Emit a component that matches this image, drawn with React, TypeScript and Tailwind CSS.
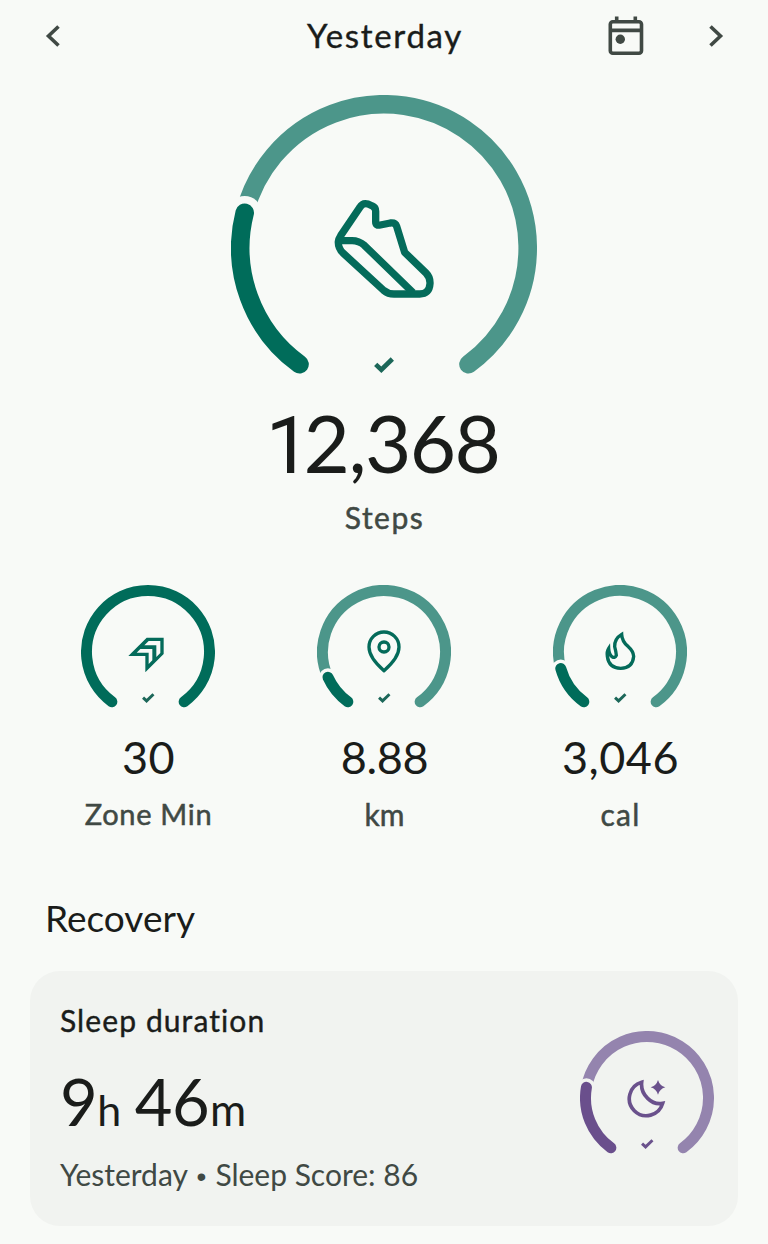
import React from "react";

type RingProps = {
  size: number;
  stroke: number;
  halo: number;
  end: number;
  dark: string;
  light: string;
  bg: string;
};

// Angles run clockwise, measured from the bottom of the ring.
function point(c: number, r: number, deg: number) {
  const a = (deg * Math.PI) / 180;
  return [c - r * Math.sin(a), c + r * Math.cos(a)];
}

function arc(c: number, r: number, from: number, to: number) {
  const [x1, y1] = point(c, r, from);
  const [x2, y2] = point(c, r, to);
  return `M${x1} ${y1}A${r} ${r} 0 ${to - from > 180 ? 1 : 0} 1 ${x2} ${y2}`;
}

function Ring({ size, stroke, halo, end, dark, light, bg }: RingProps) {
  const c = size / 2;
  const r = (size - stroke) / 2;
  const [hx, hy] = point(c, r, end);
  return (
    <svg className="col-start-1 row-start-1 block" width={size} height={size} fill="none" strokeLinecap="round">
      {end < 324 && (
        <>
          <path d={arc(c, r, end, 324)} stroke={light} strokeWidth={stroke} />
          <circle cx={hx} cy={hy} r={halo} fill={bg} />
        </>
      )}
      <path d={arc(c, r, 36, end)} stroke={dark} strokeWidth={stroke} />
    </svg>
  );
}

function Shoe() {
  return (
    <svg width="130" height="120" viewBox="0 0 390 360" fill="none" stroke="#046b5a" strokeWidth="22" strokeLinejoin="round">
      <path d="M62 137 L119 53 Q128 37 144 42 L157 48 Q167 52 167 64 V95 Q167 108 181 105 L211 99 Q226 97 230 109 L254 187 L318 249 Q331 262 330 281 Q328 312 299 312 H222 Q204 312 191 301 L69 189 Q54 174 55 155 Q56 146 62 137 Z" />
      <path d="M56 152 H96 Q117 152 133 166 L279 308" />
    </svg>
  );
}

function Check({ width, color }: { width: number; color: string }) {
  return (
    <svg width={width} height={width * 0.8} viewBox="0 0 60 48" fill="none" stroke={color} strokeWidth="14">
      <path d="M5 22 L22 38 L55 6" />
    </svg>
  );
}

function Zone() {
  return (
    <svg className="mt-[5px] mr-[4px]" width="36" height="36" viewBox="174 199 108 108">
      <path fill="#046b5a" fillRule="evenodd" d="M175 256 L230 201 H281 V250 L226 305 V256 Z M223 224 H259 V259 L271 247 V211 H236 Z M200 246 H236 V280 L247 269 V235 H211 Z" />
    </svg>
  );
}

function Pin() {
  return (
    <svg width="36" height="46" viewBox="184 177 108 138" fill="none" stroke="#046b5a" strokeWidth="10">
      <path d="M238 302 Q193 263 193 231 A45 45 0 0 1 283 231 Q283 263 238 302 Z" />
      <circle cx="238" cy="231" r="15" />
    </svg>
  );
}

function Flame() {
  return (
    <svg className="ml-[2px]" width="34" height="42" viewBox="192 184 102 126" fill="none" stroke="#046b5a" strokeWidth="10" strokeLinejoin="miter">
      <path d="M245 194 Q223 207 224 231 Q228 246 229 257 Q225 266 217 262 Q207 255 206 236 Q200 245 202 260 Q206 295 242 296 Q278 295 281 260 Q280 244 265 231 Q246 216 245 194 Z" />
    </svg>
  );
}

function Moon() {
  return (
    <svg width="40" height="40" viewBox="201 204 120 120" fill="none" stroke="#6a518c" strokeWidth="11">
      <path d="M245 217 A51 51 0 1 0 308 280 Q283 285 263 265 Q242 245 245 217 Z" />
      <path d="M294 210 Q299 227 316 232 Q299 237 294 254 Q289 237 272 232 Q289 227 294 210 Z" fill="#6a518c" stroke="none" />
    </svg>
  );
}

function SmallRing({ end, icon, purple = false }: { end: number; icon: React.ReactNode; purple?: boolean }) {
  return (
    <div className="grid h-[134px] w-[134px]">
      <Ring size={134} stroke={11} halo={9} end={end} dark={purple ? "#6a4f8c" : "#006c5a"} light={purple ? "#9484ae" : "#4c968a"} bg={purple ? "#f1f3f0" : "#f8faf7"} />
      <div className="col-start-1 row-start-1 flex items-center justify-center">{icon}</div>
      <div className="col-start-1 row-start-1 flex items-end justify-center pb-[16px] pl-[1px]">
        <Check width={12.5} color={purple ? "#6a518c" : "#1c6759"} />
      </div>
    </div>
  );
}

function Metric({ end, icon, value, label }: { end: number; icon: React.ReactNode; value: React.ReactNode; label: React.ReactNode }) {
  return (
    <div className="flex w-[236px] flex-col items-center">
      <SmallRing end={end} icon={icon} />
      <div className="mt-[14px] flex h-[48px] items-center pl-[1px] text-[45px] leading-[48px] text-[#1a1c1a]">{value}</div>
      <div className="mt-[15px] flex h-[36px] items-center pl-[1px] text-[29px] leading-[36px] text-[#404944] [-webkit-text-stroke:0.5px]">{label}</div>
    </div>
  );
}

export default function App() {
  return (
    <main className="flex h-[1244px] w-[768px] flex-col overflow-hidden bg-[#f8faf7] font-['Lato',sans-serif] whitespace-nowrap text-[#1a1c1a]">
      <header className="grid h-[72px] grid-cols-[1fr_auto_1fr] items-center">
        <svg className="ml-[44px]" width="18" height="24" viewBox="0 0 18 24" fill="none" stroke="#404944" strokeWidth="3.6">
          <path d="M14.5 2.5 L4.5 12 L14.5 21.5" />
        </svg>
        <h1 className="-mt-[2px] pl-[2px] text-[33px] leading-[40px] tracking-[1.7px] [-webkit-text-stroke:0.4px]">Yesterday</h1>
        <div className="flex items-center justify-end pr-[43px]">
          <svg width="36" height="40" viewBox="0 0 36 40" fill="none" stroke="#404944" strokeWidth="3.6">
            <rect x="2.3" y="5.8" width="31.2" height="31.4" rx="2.5" />
            <path d="M2 14.4 H34 M8.7 0.5 V6 M27.3 0.5 V6" />
            <circle cx="12.3" cy="23.2" r="4.7" fill="#404944" stroke="none" />
          </svg>
          <svg className="ml-[63px]" width="18" height="24" viewBox="0 0 18 24" fill="none" stroke="#404944" strokeWidth="3.6">
            <path d="M3.5 2.5 L13.5 12 L3.5 21.5" />
          </svg>
        </div>
      </header>

      <section className="mt-[23px] flex flex-col items-center">
        <div className="grid h-[306px] w-[306px]">
          <Ring size={306} stroke={18.6} halo={16.8} end={104.2} dark="#006c5a" light="#4c968a" bg="#f8faf7" />
          <div className="col-start-1 row-start-1 flex justify-center pt-[95px] pl-[2px]">
            <Shoe />
          </div>
          <div className="col-start-1 row-start-1 flex items-end justify-center pb-[28px]">
            <Check width={20} color="#1c6759" />
          </div>
        </div>
        <div className="-mt-[1px] flex h-[84px] items-baseline pr-[3px] text-[80px] leading-[84px]">
          <span className="font-['Roboto',sans-serif] tracking-[-7px]">1</span>
          <span className="tracking-[-1.6px]">2,368</span>
        </div>
        <div className="mt-[15px] pl-[1px] text-[30px] leading-[36px] tracking-[1.5px] text-[#404944] [-webkit-text-stroke:0.5px]">Steps</div>
      </section>

      <section className="mt-[50px] flex justify-center">
        <Metric end={324} icon={<Zone />} value={<span className="tracking-[0.5px]">30</span>} label={<span className="tracking-[0.7px]">Zone Min</span>} />
        <Metric end={65.7} icon={<Pin />} value={<span className="tracking-[-0.4px]">8.88</span>} label={<span className="text-[30px]">km</span>} />
        <Metric end={74.4} icon={<Flame />} value={<span className="tracking-[0.5px]">3,046</span>} label={<span className="text-[30px] tracking-[1.2px]">cal</span>} />
      </section>

      <h2 className="mt-[64px] ml-[45px] text-[37px] leading-[44px]">Recovery</h2>

      <section className="mx-[30px] mt-[31px] flex h-[255px] rounded-[30px] bg-[#f1f3f0]">
        <div className="flex-1 pl-[30px]">
          <h3 className="mt-[31px] text-[30px] leading-[36px] tracking-[1.1px] [-webkit-text-stroke:0.4px]">Sleep duration</h3>
          <div className="mt-[23px] text-[65px] leading-[80px] tracking-[-0.5px]">
            9<span className="text-[43px]">h</span>
            <span className="ml-[14px]">46</span>
            <span className="ml-[1px] text-[44px]">m</span>
          </div>
          <div className="mt-[6px] text-[30px] leading-[36px] text-[#404944]">
            Yesterday <span className="mx-[1.5px] font-['Liberation_Sans',sans-serif] text-[28px]">•</span> Sleep Score: 86
          </div>
        </div>
        <div className="pt-[60px] pr-[24px]">
          <SmallRing end={100} icon={<Moon />} purple />
        </div>
      </section>
    </main>
  );
}
